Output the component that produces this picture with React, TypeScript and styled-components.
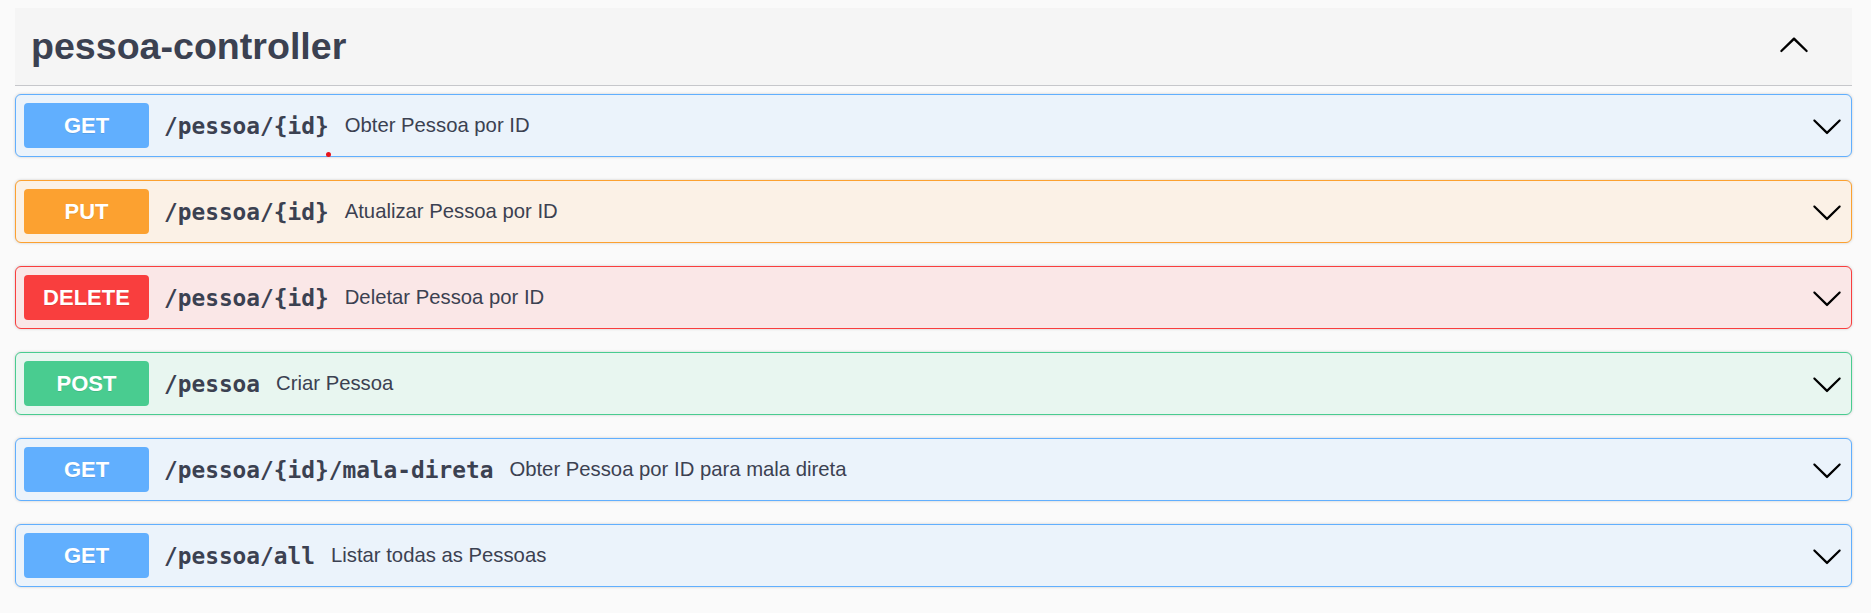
import React from "react";
import styled, { createGlobalStyle } from "styled-components";

const Global = createGlobalStyle`
  html, body { margin: 0; padding: 0; background: #fafafa; }
  body { font-family: "Liberation Sans", Arial, sans-serif; color: #3b4151; }
`;

type Method = "get" | "put" | "delete" | "post";

const palette: Record<Method, { main: string; bg: string }> = {
  get: { main: "#61affe", bg: "#ebf3fb" },
  put: { main: "#fca130", bg: "#fbf1e6" },
  delete: { main: "#f93e3e", bg: "#fae7e7" },
  post: { main: "#49cc90", bg: "#e8f6f0" },
};

const Page = styled.div`
  padding: 8px 19px 20px 15px;
`;

const TagHeader = styled.div`
  display: flex;
  align-items: center;
  height: 77px;
  background: #f5f5f5;
  border-bottom: 1px solid #c6c7cb;
  padding: 0 42px 0 16px;
  margin-bottom: 8px;
`;

const TagTitle = styled.h3`
  flex: 1;
  margin: 0;
  font-size: 37.6px;
  font-weight: 700;
  color: #3b4151;
  font-family: "Liberation Sans", Arial, sans-serif;
`;

const ToggleIcon = styled.svg<{ $lift?: boolean }>`
  display: block;
  width: 32px;
  height: 32px;
  flex-shrink: 0;
  margin-bottom: ${(p) => (p.$lift ? "6px" : "0")};
`;

const OpList = styled.div`
  display: flex;
  flex-direction: column;
  gap: 23px;
`;

const OpBlock = styled.div<{ $m: Method }>`
  position: relative;
  display: flex;
  align-items: center;
  border: 1px solid ${(p) => palette[p.$m].main};
  background: ${(p) => palette[p.$m].bg};
  border-radius: 6px;
  box-shadow: 0 0 3px rgba(0, 0, 0, 0.19);
  padding: 8px;
`;

const MethodBadge = styled.span<{ $m: Method }>`
  display: flex;
  align-items: center;
  justify-content: center;
  width: 125px;
  height: 45px;
  flex-shrink: 0;
  border-radius: 4px;
  background: ${(p) => palette[p.$m].main};
  color: #fff;
  font-family: "Liberation Sans", Arial, sans-serif;
  font-weight: 700;
  font-size: 22px;
  text-shadow: 0 1px 0 rgba(0, 0, 0, 0.1);
`;

const Path = styled.span`
  font-family: "DejaVu Sans Mono", "Liberation Mono", monospace;
  font-weight: 700;
  font-size: 22.8px;
  color: #3b4151;
  padding: 0 16px 0 15px;
  white-space: nowrap;
`;

const Description = styled.span`
  flex: 1;
  font-family: "Liberation Sans", Arial, sans-serif;
  font-size: 20.3px;
  color: #3b4151;
`;

const Dot = styled.span`
  position: absolute;
  left: 310px;
  top: 57px;
  width: 5px;
  height: 5px;
  border-radius: 50%;
  background: #e8141c;
`;

const DOWN =
  "M17.418 6.109c.272-.268.709-.268.979 0s.271.701 0 .969l-7.908 7.83c-.27.268-.707.268-.979 0l-7.908-7.83c-.27-.268-.27-.701 0-.969.271-.268.709-.268.979 0L10 13.25l7.418-7.141z";
const UP =
  "M17.418 14.908c.272.268.709.268.979 0s.271-.701 0-.969l-7.908-7.83c-.27-.268-.707-.268-.979 0l-7.908 7.83c-.27.268-.27.701 0 .969.271.268.709.268.979 0L10 7.767l7.418 7.141z";

const Arrow = ({ d, lift }: { d: string; lift?: boolean }) => (
  <ToggleIcon viewBox="0 0 20 20" aria-hidden="true" $lift={lift}>
    <path d={d} fill="#000" />
  </ToggleIcon>
);

const ops: { m: Method; path: string; desc: string }[] = [
  { m: "get", path: "/pessoa/{id}", desc: "Obter Pessoa por ID" },
  { m: "put", path: "/pessoa/{id}", desc: "Atualizar Pessoa por ID" },
  { m: "delete", path: "/pessoa/{id}", desc: "Deletar Pessoa por ID" },
  { m: "post", path: "/pessoa", desc: "Criar Pessoa" },
  { m: "get", path: "/pessoa/{id}/mala-direta", desc: "Obter Pessoa por ID para mala direta" },
  { m: "get", path: "/pessoa/all", desc: "Listar todas as Pessoas" },
];

export default function App() {
  return (
    <>
      <Global />
      <Page>
        <TagHeader>
          <TagTitle>pessoa-controller</TagTitle>
          <Arrow d={UP} lift />
        </TagHeader>
        <OpList>
          {ops.map((o, i) => (
            <OpBlock key={i} $m={o.m}>
              <MethodBadge $m={o.m}>{o.m.toUpperCase()}</MethodBadge>
              <Path>{o.path}</Path>
              <Description>{o.desc}</Description>
              <Arrow d={DOWN} />
              {i === 0 && <Dot />}
            </OpBlock>
          ))}
        </OpList>
      </Page>
    </>
  );
}
